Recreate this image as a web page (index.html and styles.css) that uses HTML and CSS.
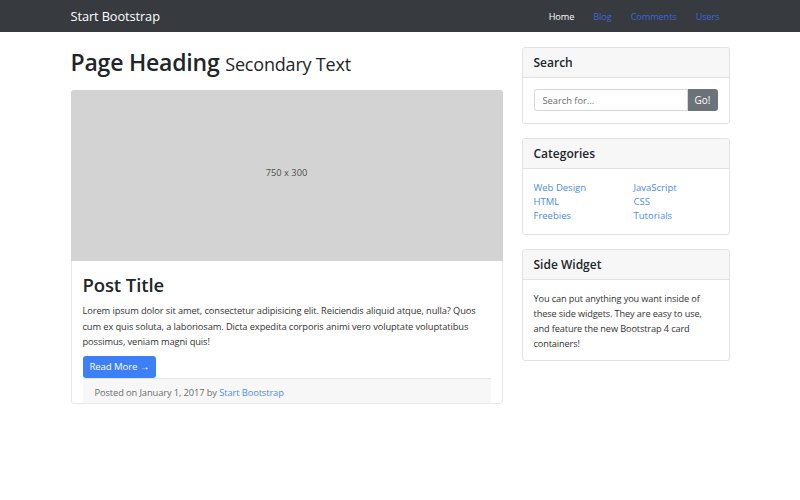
FILE: index.html
```html
<!DOCTYPE html>
<html>
<head>
<meta charset="utf-8">
<link rel="stylesheet" href="styles.css">
</head>
<body>
<nav class="navbar">
  <div class="container nav-inner">
    <a class="brand" href="#">Start Bootstrap</a>
    <ul class="nav-links">
      <li><a class="active" href="#">Home</a></li>
      <li><a href="#">Blog</a></li>
      <li><a href="#">Comments</a></li>
      <li><a href="#">Users</a></li>
    </ul>
  </div>
</nav>
<div class="container main">
  <div class="col-main">
    <h1 class="page-heading">Page Heading <small>Secondary Text</small></h1>
    <div class="card post">
      <div class="placeholder">750 x 300</div>
      <div class="post-body">
        <h2 class="post-title">Post Title</h2>
        <p class="post-text">Lorem ipsum dolor sit amet, consectetur adipisicing elit. Reiciendis aliquid atque, nulla? Quos cum ex quis soluta, a laboriosam. Dicta expedita corporis animi vero voluptate voluptatibus possimus, veniam magni quis!</p>
        <a class="btn-primary" href="#">Read More &rarr;</a>
        <div class="post-footer">Posted on January 1, 2017 by <a href="#">Start Bootstrap</a></div>
      </div>
    </div>
  </div>
  <div class="col-side">
    <div class="card widget">
      <h5 class="card-header">Search</h5>
      <div class="card-body search-body">
        <div class="input-group">
          <input class="search-input" type="text" placeholder="Search for...">
          <button class="btn-go">Go!</button>
        </div>
      </div>
    </div>
    <div class="card widget">
      <h5 class="card-header">Categories</h5>
      <div class="card-body cats">
        <ul class="cat-list">
          <li><a href="#">Web Design</a></li>
          <li><a href="#">HTML</a></li>
          <li><a href="#">Freebies</a></li>
        </ul>
        <ul class="cat-list">
          <li><a href="#">JavaScript</a></li>
          <li><a href="#">CSS</a></li>
          <li><a href="#">Tutorials</a></li>
        </ul>
      </div>
    </div>
    <div class="card widget">
      <h5 class="card-header">Side Widget</h5>
      <div class="card-body side-text">You can put anything you want inside of these side widgets. They are easy to use, and feature the new Bootstrap 4 card containers!</div>
    </div>
  </div>
</div>
</body>
</html>
```

FILE: styles.css
```css
* { box-sizing: border-box; }
body {
  margin: 0;
  font-family: "Open Sans", "Noto Sans", sans-serif;
  color: #212529;
  background: #fff;
  font-size: 9.5px;
}
a { text-decoration: none; color: #4a8bef; }
.container { width: 659px; margin: 0 auto; }
.navbar { background: #373a3f; height: 32px; }
.nav-inner { display: flex; align-items: center; justify-content: space-between; height: 32px; }
.brand { color: #fff; font-size: 12.8px; letter-spacing: -0.1px; }
.nav-links { list-style: none; margin: 0; padding: 0 10px 0 0; display: flex; gap: 19px; }
.nav-links a { color: #3d66dc; font-size: 9.2px; letter-spacing: -0.1px; }
.nav-links a.active { color: #fff; }
.main { display: flex; gap: 19px; align-items: flex-start; }
.col-main { width: 432px; }
.col-side { width: 208px; padding-top: 15px; display: flex; flex-direction: column; gap: 14px; }
.page-heading { margin: 0; padding-top: 14px; height: 58px; font-size: 23px; font-weight: 600; line-height: 32px; color: #212529; letter-spacing: -0.2px; }
.page-heading small { font-size: 18px; font-weight: 400; letter-spacing: -0.2px; }
.card { border: 1px solid #e2e2e2; border-radius: 3px; background: #fff; }
.post { border-color: #e8e8e8; }
.placeholder { height: 171px; background: #d3d3d3; border-radius: 3px 3px 0 0; display: flex; align-items: center; justify-content: center; color: #505050; font-size: 9.3px; margin: -1px -1px 0; padding-bottom: 7px; }
.post-body { padding: 12px 11px 0 11px; }
.post-title { margin: 0; font-size: 18.5px; font-weight: 600; line-height: 24px; color: #212529; letter-spacing: -0.1px; }
.post-text { margin: 6px 0 6px; line-height: 15.5px; color: #333; font-size: 9.3px; letter-spacing: -0.1px; }
.btn-primary { display: inline-block; background: #3d7ff6; color: #fff; font-size: 9.6px; line-height: 22px; height: 22px; padding: 0 7px; border-radius: 3px; letter-spacing: -0.1px; }
.post-footer { background: #f7f7f7; border-top: 1px solid #e6e6e6; height: 25px; padding: 0 12px; line-height: 28px; color: #6c6c6c; font-size: 9.3px; letter-spacing: -0.1px; }
.card-header { margin: 0; height: 30px; background: #f7f7f7; border-bottom: 1px solid #e2e2e2; padding: 0 11px; line-height: 30px; font-size: 12px; font-weight: 600; color: #212529; border-radius: 3px 3px 0 0; }
.card-body { padding: 11px; }
.search-body { padding-bottom: 12px; }
.input-group { display: flex; height: 22px; }
.search-input { flex: 1; min-width: 0; border: 1px solid #d8d8d8; border-radius: 3px 0 0 3px; font-family: inherit; font-size: 9.3px; padding: 0 8px; color: #555; }
.search-input::placeholder { color: #6c6c6c; }
.btn-go { width: 30px; border: 0; background: #6c737b; color: #fff; font-family: inherit; font-size: 10px; border-radius: 0 3px 3px 0; padding: 0; }
.cats { display: flex; padding-top: 12px; padding-bottom: 10px; }
.cat-list { list-style: none; margin: 0; padding: 0; flex: 0 0 100px; line-height: 14.2px; }
.side-text { padding-top: 11px; padding-bottom: 9px; line-height: 15px; color: #333; font-size: 9.2px; letter-spacing: -0.12px; }
```
